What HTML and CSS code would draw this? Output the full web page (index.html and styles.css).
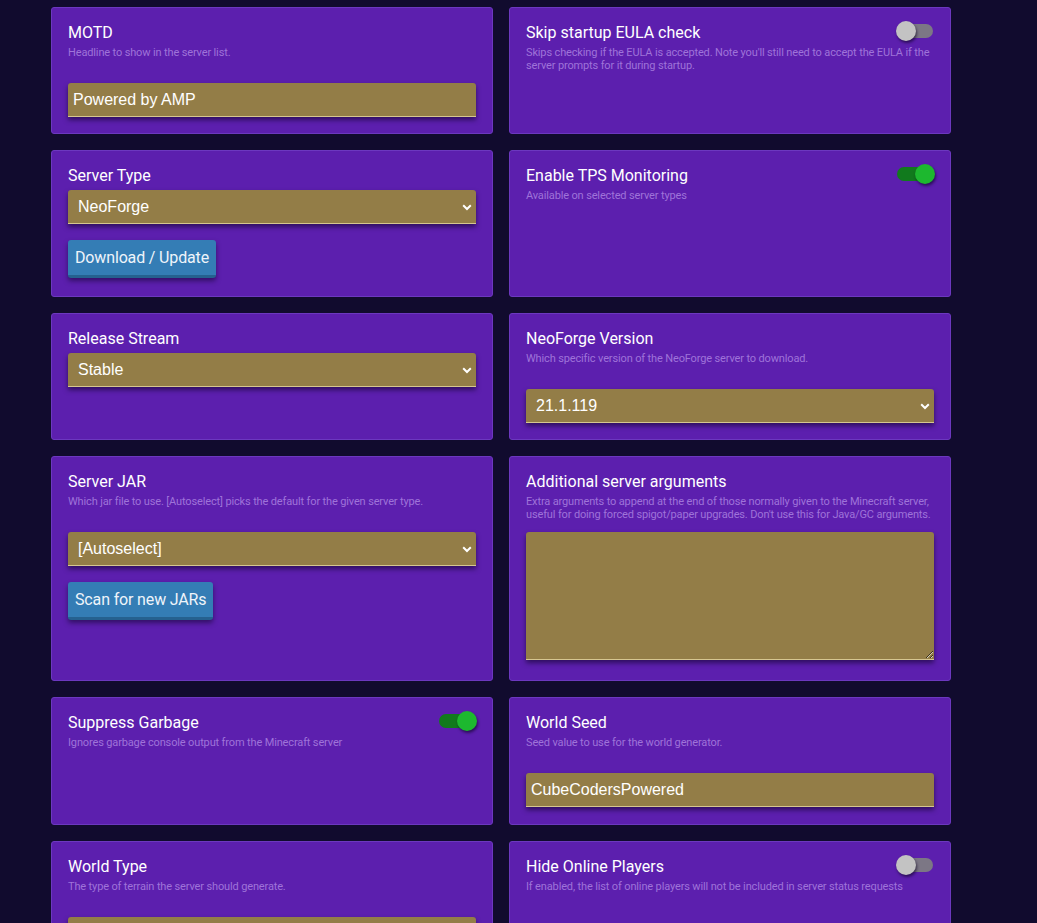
FILE: index.html
```html
<!DOCTYPE html>
<html lang="en">
<head>
<meta charset="utf-8">
<title>Server settings</title>
<link rel="stylesheet" href="styles.css">
</head>
<body>
<div class="grid">
  <div class="card">
    <div class="head"><div class="title">MOTD</div></div>
    <div class="desc">Headline to show in the server list.</div>
    <input class="field" type="text" value="Powered by AMP">
  </div>
  <div class="card">
    <div class="head"><div class="title">Skip startup EULA check</div><div class="switch"><span class="knob"></span></div></div>
    <div class="desc">Skips checking if the EULA is accepted. Note you'll still need to accept the EULA if the server prompts for it during startup.</div>
  </div>

  <div class="card">
    <div class="head"><div class="title">Server Type</div></div>
    <div class="selwrap">
      <select class="field sel"><option>NeoForge</option></select>
      <svg class="chev" width="10" height="7" viewBox="0 0 10 7"><path d="M1.2 1.3 L5 5 L8.8 1.3" fill="none" stroke="#fff" stroke-width="2"/></svg>
    </div>
    <button class="btn">Download / Update</button>
  </div>
  <div class="card">
    <div class="head"><div class="title">Enable TPS Monitoring</div><div class="switch on"><span class="knob"></span></div></div>
    <div class="desc">Available on selected server types</div>
  </div>

  <div class="card">
    <div class="head"><div class="title">Release Stream</div></div>
    <div class="selwrap">
      <select class="field sel"><option>Stable</option></select>
      <svg class="chev" width="10" height="7" viewBox="0 0 10 7"><path d="M1.2 1.3 L5 5 L8.8 1.3" fill="none" stroke="#fff" stroke-width="2"/></svg>
    </div>
  </div>
  <div class="card">
    <div class="head"><div class="title">NeoForge Version</div></div>
    <div class="desc">Which specific version of the NeoForge server to download.</div>
    <div class="selwrap">
      <select class="field sel"><option>21.1.119</option></select>
      <svg class="chev" width="10" height="7" viewBox="0 0 10 7"><path d="M1.2 1.3 L5 5 L8.8 1.3" fill="none" stroke="#fff" stroke-width="2"/></svg>
    </div>
  </div>

  <div class="card">
    <div class="head"><div class="title">Server JAR</div></div>
    <div class="desc">Which jar file to use. [Autoselect] picks the default for the given server type.</div>
    <div class="selwrap">
      <select class="field sel"><option>[Autoselect]</option></select>
      <svg class="chev" width="10" height="7" viewBox="0 0 10 7"><path d="M1.2 1.3 L5 5 L8.8 1.3" fill="none" stroke="#fff" stroke-width="2"/></svg>
    </div>
    <button class="btn">Scan for new JARs</button>
  </div>
  <div class="card">
    <div class="head"><div class="title">Additional server arguments</div></div>
    <div class="desc">Extra arguments to append at the end of those normally given to the Minecraft server, useful for doing forced spigot/paper upgrades. Don't use this for Java/GC arguments.</div>
    <textarea class="field area"></textarea>
  </div>

  <div class="card">
    <div class="head"><div class="title">Suppress Garbage</div><div class="switch on"><span class="knob"></span></div></div>
    <div class="desc">Ignores garbage console output from the Minecraft server</div>
  </div>
  <div class="card">
    <div class="head"><div class="title">World Seed</div></div>
    <div class="desc">Seed value to use for the world generator.</div>
    <input class="field seed" type="text" value="CubeCodersPowered">
  </div>

  <div class="card">
    <div class="head"><div class="title">World Type</div></div>
    <div class="desc">The type of terrain the server should generate.</div>
    <div class="selwrap">
      <select class="field sel"><option>Default</option></select>
      <svg class="chev" width="10" height="7" viewBox="0 0 10 7"><path d="M1.2 1.3 L5 5 L8.8 1.3" fill="none" stroke="#fff" stroke-width="2"/></svg>
    </div>
  </div>
  <div class="card">
    <div class="head"><div class="title">Hide Online Players</div><div class="switch"><span class="knob"></span></div></div>
    <div class="desc">If enabled, the list of online players will not be included in server status requests</div>
  </div>
</div>
</body>
</html>
```
FILE: styles.css
```css
html {
  overflow: hidden;
}
body {
  margin: 0;
  background: #110b2e;
  font-family: Roboto, "Liberation Sans", Arial, sans-serif;
}
.grid {
  display: grid;
  grid-template-columns: 442px 442px;
  gap: 16px;
  padding: 7px 0 0 51px;
}
.card {
  background: #5c1fae;
  border: 1px solid #6c38bf;
  border-radius: 3px;
  padding: 14px 16px 16px;
  display: flex;
  flex-direction: column;
  align-items: flex-start;
}
.head {
  display: flex;
  justify-content: space-between;
  align-items: flex-start;
  align-self: stretch;
  height: 25px;
}
.title {
  color: #fff;
  font-size: 16px;
  line-height: 22px;
}
.desc {
  color: #9f73d9;
  font-size: 11px;
  letter-spacing: -0.14px;
  line-height: 12.6px;
  min-height: 25px;
  margin-bottom: 11px;
}
.field {
  display: block;
  box-sizing: border-box;
  width: 408px;
  height: 34px;
  margin: 0;
  background: #937d47;
  border: none;
  border-bottom: 1px solid #d6c690;
  border-radius: 3px 3px 0 0;
  box-shadow: 0 3px 5px rgba(10, 0, 30, 0.55);
  color: #fff;
  font-family: "Liberation Sans", Arial, sans-serif;
  font-size: 16px;
  padding: 0 5px;
  outline: none;
}
.seed {
  margin-bottom: 1px;
}
.selwrap {
  position: relative;
}
.sel {
  appearance: none;
  -webkit-appearance: none;
  padding: 0 10px;
}
.chev {
  position: absolute;
  right: 4px;
  top: 14px;
}
.area {
  height: 128px;
  resize: vertical;
  margin-bottom: 4px;
}
.btn {
  margin-top: 16px;
  margin-bottom: 2px;
  height: 38px;
  padding: 0 7px;
  background: #347db5;
  border: none;
  border-bottom: 3px solid #25618f;
  border-radius: 3px;
  box-shadow: 0 3px 5px rgba(10, 0, 30, 0.5);
  color: #eef4fa;
  font-family: Roboto, sans-serif;
  font-size: 16px;
  letter-spacing: -0.15px;
}
.switch {
  position: relative;
  flex: none;
  width: 36px;
  height: 14px;
  border-radius: 7px;
  background: #7c7785;
  margin-top: 2px;
  margin-right: 1px;
}
.knob {
  position: absolute;
  top: -3px;
  left: -1px;
  width: 20px;
  height: 20px;
  border-radius: 50%;
  background: #c3c3c3;
  box-shadow: 1px 2px 3px rgba(10, 0, 30, 0.6);
}
.switch.on {
  background: #117a1d;
}
.switch.on .knob {
  left: auto;
  right: -2px;
  background: #1db82f;
}
```
